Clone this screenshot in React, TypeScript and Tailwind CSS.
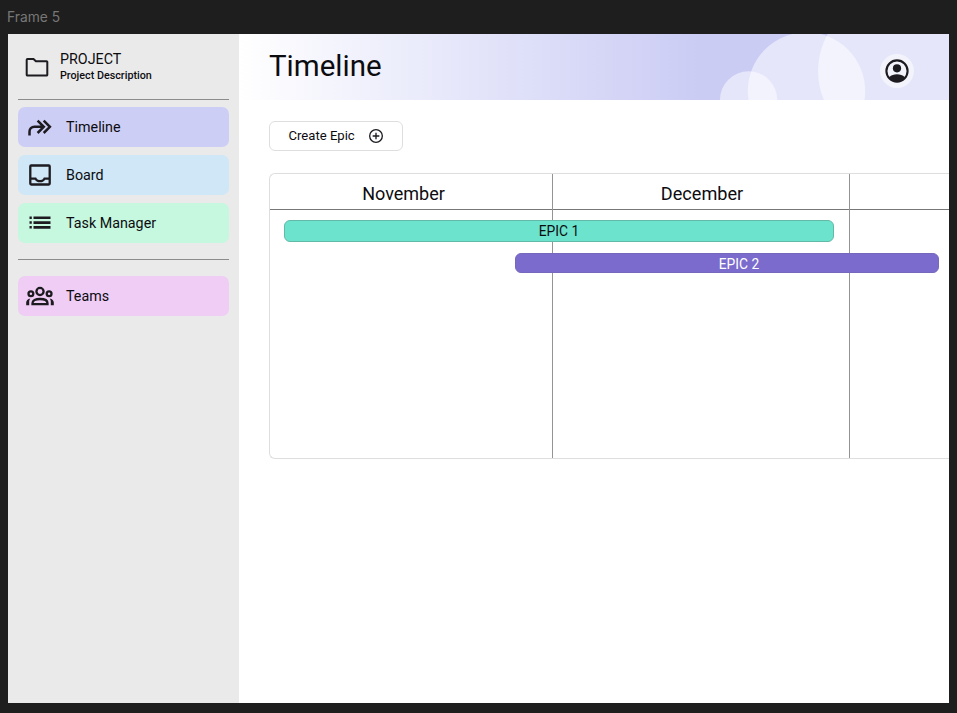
import type { ReactNode } from "react";

function Icon({ className, children }: { className: string; children: ReactNode }) {
  return (
    <svg viewBox="0 0 24 24" className={className} fill="currentColor">
      {children}
    </svg>
  );
}

function NavItem({ label, color, children }: { label: string; color: string; children: ReactNode }) {
  return (
    <div className={`flex h-10 items-center rounded-[7px] ${color}`}>
      <div className="flex w-11 shrink-0 justify-center text-[#1d1b20]">{children}</div>
      <span className="ml-1 text-[14.3px] leading-5">{label}</span>
    </div>
  );
}

function Sidebar() {
  return (
    <aside className="flex w-[231px] shrink-0 flex-col bg-[#eaeaea] px-2.5">
      <div className="flex h-[65px] items-center pl-[7px]">
        <Icon className="h-6 w-6 text-[#1d1b20]">
          <path
            d="M2.500 4h6l2.400 2.300h10.600a.8.8 0 0 1 .8.8v12.700a.8.8 0 0 1-.8.8h-19a.8.8 0 0 1-.8-.8v-15a.8.8 0 0 1 .8-.8z"
            fill="none"
            stroke="currentColor"
            strokeWidth="2"
          />
        </Icon>
        <div className="ml-[11px] flex flex-col">
          <span className="text-[14.3px] leading-[18px]">PROJECT</span>
          <span className="text-[10.75px] leading-4 font-medium">Project Description</span>
        </div>
      </div>
      <div className="h-px bg-[#8c8c8c]" />
      <nav className="mt-[7px] flex flex-col gap-2">
        <NavItem label="Timeline" color="bg-[#cdcef5]">
          <Icon className="h-6 w-6">
            <path
              d="M1.500 20.500v-3.700c0-3 2-5 5-5h9.500M9.600 5.600l6.200 6.200-6.200 6.200M15.700 5.600l6.200 6.200-6.200 6.200"
              fill="none"
              stroke="currentColor"
              strokeWidth="2.500"
            />
          </Icon>
        </NavItem>
        <NavItem label="Board" color="bg-[#cfe7f6]">
          <Icon className="h-6 w-6">
            <path
              d="M3.200 2.500h17.600a.9.9 0 0 1 .9.900v17.200a.9.900 0 0 1-.9.900H3.200a.9.900 0 0 1-.9-.9V3.400a.9.900 0 0 1 .9-.9zM2.300 15.700h5.200c.8 1.500 2.500 2.500 4.500 2.500s3.700-1 4.500-2.500h5.200"
              fill="none"
              stroke="currentColor"
              strokeWidth="2.300"
            />
          </Icon>
        </NavItem>
        <NavItem label="Task Manager" color="bg-[#c6f7df]">
          <Icon className="h-6 w-6">
            <path d="M1.500 5.500h2.300v2.500H1.500zM1.500 10.300h2.300v2.500H1.500zM1.500 15.100h2.300v2.500H1.500zM5.500 5.400h17v2.700h-17zM5.500 10.200h17v2.700h-17zM5.500 15h17v2.700h-17z" />
          </Icon>
        </NavItem>
      </nav>
      <div className="mt-4 h-px bg-[#8c8c8c]" />
      <nav className="mt-4">
        <NavItem label="Teams" color="bg-[#efcdf5]">
          <svg viewBox="0 0 28 20" className="h-5 w-7" fill="none" stroke="currentColor" strokeWidth="2.300">
            <circle cx="14" cy="5.500" r="3.600" />
            <circle cx="4.900" cy="7.700" r="2.400" />
            <circle cx="23.100" cy="7.700" r="2.400" />
            <path d="M6.500 18.200v-1c0-2.700 3-4.200 7.500-4.200s7.500 1.500 7.500 4.200v1z" />
            <path
              d="M.2 19.300v-2.700c0-2.300 1.500-3.800 4.100-4.200-.7.800-1.100 2-1.100 3.200v3.700zM27.800 19.300v-2.700c0-2.300-1.500-3.800-4.100-4.200.7.800 1.100 2 1.100 3.200v3.700z"
              fill="currentColor"
              stroke="none"
            />
          </svg>
        </NavItem>
      </nav>
    </aside>
  );
}

function Header() {
  return (
    <header className="relative flex h-[66px] items-center justify-between overflow-hidden bg-linear-to-r from-white from-0% to-[#cbccf4] to-65% pr-[35.500px] pl-[30px]">
      <svg viewBox="0 0 710 66" className="absolute inset-0 h-full w-full" fill="#ffffff" fillOpacity="0.5">
        <circle cx="509.600" cy="66" r="28.700" />
        <circle cx="567.500" cy="57" r="58.700" />
        <circle cx="654" cy="37" r="75" />
      </svg>
      <h1 className="relative pb-0.5 text-[29.5px] leading-9">Timeline</h1>
      <div className="relative mt-[7px] flex h-[34px] w-[34px] items-center justify-center rounded-full bg-[#f3f3fc] text-[#1d1b20]">
        <Icon className="h-6 w-6">
          <circle cx="12" cy="12" r="10.600" fill="none" stroke="currentColor" strokeWidth="2.100" />
          <circle cx="12" cy="9.300" r="4.100" />
          <path d="M4.200 18.200C6.300 16.200 9 15.300 12 15.300s5.700.9 7.800 2.900C18.200 21 15.300 22.800 12 22.800s-6.200-1.800-7.800-4.600z" />
        </Icon>
      </div>
    </header>
  );
}

function Timeline() {
  return (
    <section className="relative mt-[22px] ml-[30px] flex h-[286px] rounded-l-[6px] border border-r-0 border-[#dedede]">
      <div className="w-[283px] border-r border-[#949494]">
        <div className="flex h-9 items-center justify-center border-b border-[#777777] pt-[3px] pr-[15px] text-[18px]">November</div>
      </div>
      <div className="w-[297px] border-r border-[#949494]">
        <div className="flex h-9 items-center justify-center border-b border-[#777777] pt-1 pl-0.5 text-[18.1px]">December</div>
      </div>
      <div className="flex-1">
        <div className="h-9 border-b border-[#777777]" />
      </div>
      <div className="absolute top-[46px] left-[14px] flex h-[22px] w-[550px] items-center justify-center rounded-[6px] border border-[#63b9a8] bg-[#6ce3cd] text-[13.8px]">
        EPIC 1
      </div>
      <div className="absolute top-[79px] left-[245px] flex h-[20px] w-[424px] items-center justify-center rounded-[6px] border border-[#7669bd] bg-[#7b6bcd] pt-0.5 pl-6 text-[13.8px] text-white">
        EPIC 2
      </div>
    </section>
  );
}

export default function App() {
  return (
    <div className="flex h-[713px] w-[957px] flex-col overflow-hidden bg-[#1e1e1e] font-[Roboto,sans-serif] text-[#0c0c10]">
      <div className="flex h-[34px] items-center pl-[7px] font-[Inter,sans-serif] text-[13.8px] text-[#777777]">Frame 5</div>
      <div className="ml-2 flex h-[669px] w-[941px] overflow-hidden bg-white">
        <Sidebar />
        <main className="flex min-w-0 flex-1 flex-col">
          <Header />
          <button className="mt-[21px] ml-[30px] flex h-[30px] w-[134px] items-center rounded-[6px] border border-[#dedede] pl-[18.5px] text-[13.1px]">
            Create Epic
            <Icon className="ml-[13px] h-4 w-4 text-[#1d1b20]">
              <path d="M12 2.500a9.500 9.500 0 1 0 0 19 9.500 9.500 0 0 0 0-19zM12 7v10M7 12h10" fill="none" stroke="currentColor" strokeWidth="2" />
            </Icon>
          </button>
          <Timeline />
        </main>
      </div>
    </div>
  );
}
